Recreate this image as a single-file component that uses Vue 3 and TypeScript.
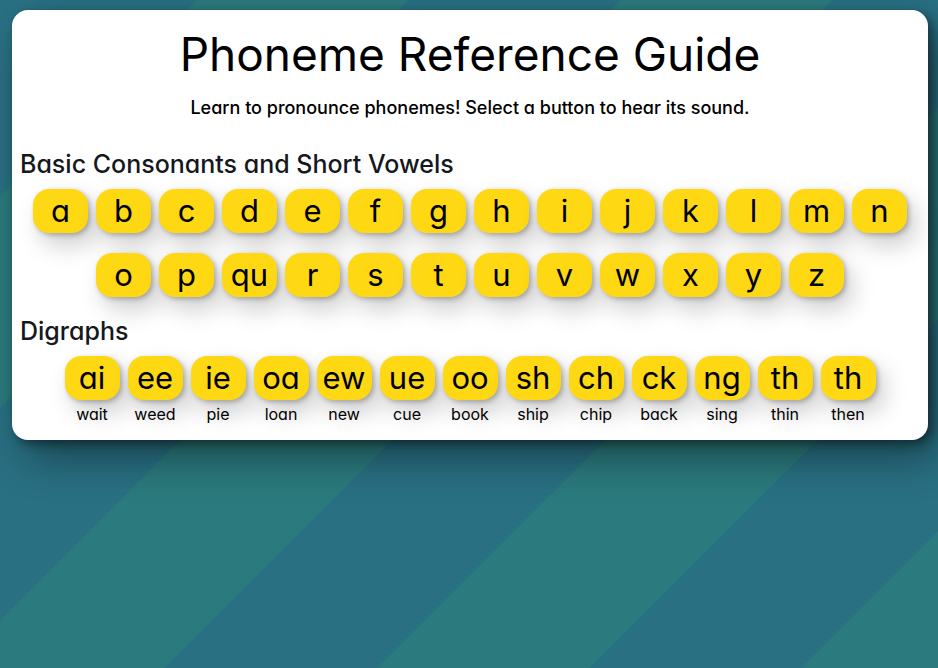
<script setup lang="ts">
interface Phoneme {
  text: string
  example?: string
}

interface Section {
  id: string
  title: string
  phonemes: Phoneme[]
}

const basics: string[] = [
  'a', 'b', 'c', 'd', 'e', 'f', 'g', 'h', 'i', 'j', 'k', 'l', 'm', 'n',
  'o', 'p', 'qu', 'r', 's', 't', 'u', 'v', 'w', 'x', 'y', 'z',
]

const digraphs: [string, string][] = [
  ['ai', 'wait'], ['ee', 'weed'], ['ie', 'pie'], ['oa', 'loan'], ['ew', 'new'],
  ['ue', 'cue'], ['oo', 'book'], ['sh', 'ship'], ['ch', 'chip'], ['ck', 'back'],
  ['ng', 'sing'], ['th', 'thin'], ['th', 'then'],
]

const sections: Section[] = [
  {
    id: 'basic',
    title: 'Basic Consonants and Short Vowels',
    phonemes: basics.map((text) => ({ text })),
  },
  {
    id: 'digraphs',
    title: 'Digraphs',
    phonemes: digraphs.map(([text, example]) => ({ text, example })),
  },
]
</script>

<template>
  <main class="card">
    <h1>Phoneme Reference Guide</h1>
    <p class="intro">Learn to pronounce phonemes! Select a button to hear its sound.</p>
    <section v-for="section in sections" :key="section.id">
      <h2>{{ section.title }}</h2>
      <ul class="phonemes">
        <li v-for="(phoneme, index) in section.phonemes" :key="index">
          <button type="button">{{ phoneme.text }}</button>
          <span v-if="phoneme.example" class="example">{{ phoneme.example }}</span>
        </li>
      </ul>
    </section>
  </main>
</template>

<style>
body {
  min-height: 100vh;
  background: repeating-linear-gradient(
    135deg,
    #297083 0 139px,
    #2b7a7d 139px 289px,
    #297083 289px 300px
  );
}

#app {
  display: flow-root;
}
</style>

<style scoped>
.card {
  box-sizing: border-box;
  margin: 10px 10px 40px 12px;
  padding: 16px 8px 14px;
  border-radius: 16px;
  background: #fff;
  color: #000;
  font-family: Inter, "Open Sans", sans-serif;
  font-feature-settings: "cv11";
  box-shadow: 4px 4px 10px rgba(0, 0, 0, 0.4), 12px 18px 40px rgba(0, 0, 0, 0.4);
}

h1 {
  margin: 0;
  font-size: 46px;
  font-weight: 400;
  line-height: 56px;
  text-align: center;
}

.intro {
  margin: 12px 0 0;
  font-size: 18px;
  font-weight: 500;
  line-height: 28px;
  text-align: center;
}

h2 {
  margin: 0;
  color: #15181c;
  font-size: 25px;
  font-weight: 500;
  line-height: 36px;
}

.intro + section {
  margin-top: 24px;
}

section + section {
  margin-top: 16px;
}

.phonemes {
  display: flex;
  flex-wrap: wrap;
  justify-content: center;
  gap: 20px 8px;
  margin: 7px 0 0;
  padding: 0;
  list-style: none;
}

li {
  display: flex;
  flex-direction: column;
  align-items: center;
  width: 55px;
}

button {
  width: 55px;
  height: 44px;
  padding: 0;
  border: 0;
  border-radius: 16px;
  background: #ffd814;
  color: #000;
  font-family: inherit;
  font-feature-settings: inherit;
  font-size: 31px;
  font-weight: 400;
  line-height: 42px;
  cursor: pointer;
  box-shadow: 2px 2px 5px rgba(0, 0, 0, 0.25), 8px 12px 24px rgba(0, 0, 0, 0.2);
}

.example {
  margin-top: 2px;
  font-size: 16px;
  line-height: 24px;
}
</style>
